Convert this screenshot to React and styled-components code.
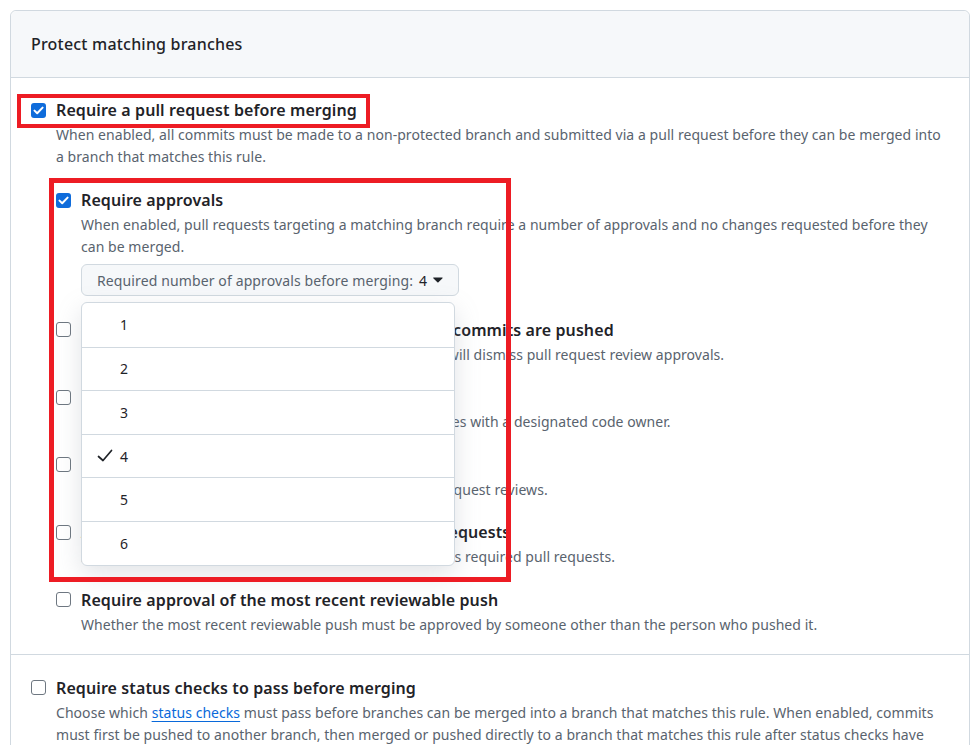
import styled, { createGlobalStyle } from "styled-components"

const GlobalStyle = createGlobalStyle`
    * { box-sizing: border-box; }
    body {
        margin: 0;
        background: #ffffff;
        font-family: "Noto Sans", "Liberation Sans", sans-serif;
        color: #1f2328;
    }
`

const options = [
    {
        title: "Dismiss stale pull request approvals when new commits are pushed",
        text: "New reviewable commits pushed to a matching branch will dismiss pull request review approvals.",
    },
    {
        title: "Require review from Code Owners",
        text: "Require an approved review in pull requests including files with a designated code owner.",
    },
    {
        title: "Restrict who can dismiss pull request reviews",
        text: "Specify people, teams, or apps allowed to dismiss pull request reviews.",
    },
    {
        title: "Allow specified actors to bypass required pull requests",
        text: "Specify people, teams, or apps who are allowed to bypass required pull requests.",
    },
    {
        title: "Require approval of the most recent reviewable push",
        text: "Whether the most recent reviewable push must be approved by someone other than the person who pushed it.",
    },
]

const approvals = [1, 2, 3, 4, 5, 6]
const selected = 4

function CheckMark() {
    return (
        <svg width="11" height="9" viewBox="0 0 11 9">
            <polyline points="1.5,4.6 4.2,7.2 9.6,1.6" fill="none" stroke="#fff" strokeWidth="2" strokeLinecap="round" strokeLinejoin="round" />
        </svg>
    )
}

function Option({ checked, title, children, highlight }) {
    return (
        <Item>
            <Box checked={checked}>{checked ? <CheckMark /> : null}</Box>
            <ItemBody>
                <ItemTitle>{title}</ItemTitle>
                {children}
            </ItemBody>
            {highlight ? <Highlight {...highlight} /> : null}
        </Item>
    )
}

export default function App() {
    return (
        <Page>
            <GlobalStyle />
            <Panel>
                <Header>
                    <h2>Protect matching branches</h2>
                </Header>

                <Section>
                    <Item>
                        <Box checked><CheckMark /></Box>
                        <ItemBody>
                            <TitleRow>
                                <ItemTitle>Require a pull request before merging</ItemTitle>
                                <Highlight top={-4} left={-39} width={353} height={34} size={4} />
                            </TitleRow>
                            <Note>
                                When enabled, all commits must be made to a non-protected branch and submitted via a pull request before they can be merged into a branch that matches this rule.
                            </Note>

                            <Nested>
                                <Option checked title="Require approvals" highlight={{ top: -10, left: -7, width: 462, height: 404, size: 5 }}>
                                    <Note>
                                        When enabled, pull requests targeting a matching branch require a number of approvals and no changes requested before they can be merged.
                                    </Note>
                                    <MenuWrap>
                                        <SelectButton>
                                            <span>Required number of approvals before merging:</span>
                                            <strong>{selected}</strong>
                                            <svg width="10" height="6" viewBox="0 0 10 6">
                                                <path d="M0.6 0.4h8.8a.4.4 0 0 1 .3.7L5.3 5.5a.4.4 0 0 1-.6 0L.3 1.1a.4.4 0 0 1 .3-.7Z" fill="#1f2328" />
                                            </svg>
                                        </SelectButton>
                                        <Menu>
                                            {approvals.map((n) => (
                                                <MenuItem key={n}>
                                                    <Tick>
                                                        {n === selected ? (
                                                            <svg width="16" height="14" viewBox="0 0 16 14">
                                                                <polyline points="1.5,7.5 6,11.5 14.5,1.5" fill="none" stroke="#1f2328" strokeWidth="1.7" strokeLinecap="round" strokeLinejoin="round" />
                                                            </svg>
                                                        ) : null}
                                                    </Tick>
                                                    {n}
                                                </MenuItem>
                                            ))}
                                        </Menu>
                                    </MenuWrap>
                                </Option>

                                {options.map((o) => (
                                    <Option key={o.title} title={o.title}>
                                        <Note>{o.text}</Note>
                                    </Option>
                                ))}
                            </Nested>
                        </ItemBody>
                    </Item>
                </Section>

                <Section last>
                    <Option title="Require status checks to pass before merging">
                        <Note>
                            Choose which <a href="#status">status checks</a> must pass before branches can be merged into a branch that matches this rule. When enabled, commits must first be pushed to another branch, then merged or pushed directly to a branch that matches this rule after status checks have passed.
                        </Note>
                    </Option>
                </Section>
            </Panel>
        </Page>
    )
}

const Page = styled.div`
    padding: 10px 6px 0 10px;
    height: 745px;
    overflow: hidden;
`
const Panel = styled.div`
    border: 1px solid #d1d9e0;
    border-radius: 6px 6px 0 0;
`
const Header = styled.div`
    display: flex;
    align-items: center;
    height: 67px;
    padding: 0 20px;
    background-color: #f6f8fa;
    border-bottom: 1px solid #d1d9e0;
    border-radius: 6px 6px 0 0;
    h2 {
        margin: 0;
        font-size: 16px;
        font-weight: 500;
        letter-spacing: 0.2px;
        color: #1f2328;
    }
`
const Section = styled.div`
    padding: ${(p) => (p.last ? "21px 20px 40px" : "20px 20px 18px")};
    border-bottom: ${(p) => (p.last ? "none" : "1px solid #d1d9e0")};
`
const Item = styled.div`
    position: relative;
    display: grid;
    grid-template-columns: 25px 1fr;
`
const Box = styled.span`
    width: 15px;
    height: 15px;
    margin-top: 4.5px;
    border-radius: 3px;
    display: flex;
    align-items: center;
    justify-content: center;
    border: ${(p) => (p.checked ? "none" : "1px solid #6e7781")};
    background-color: ${(p) => (p.checked ? "#0f6cdb" : "#ffffff")};
`
const ItemBody = styled.div`
    min-width: 0;
`
const TitleRow = styled.div`
    position: relative;
    display: inline-block;
    vertical-align: top;
`
const ItemTitle = styled.div`
    font-size: 16px;
    font-weight: 600;
    line-height: 24px;
    letter-spacing: 0.1px;
    color: #1f2328;
`
const Note = styled.p`
    margin: 2px 0 0;
    font-size: 14px;
    line-height: 22px;
    letter-spacing: 0.05px;
    color: #59636e;
    a {
        color: #0969da;
        text-decoration: underline;
        text-underline-offset: 3px;
    }
`
const Nested = styled.div`
    display: flex;
    flex-direction: column;
    gap: 19.6px;
    margin-top: 20px;
`
const Highlight = styled.span`
    position: absolute;
    top: ${(p) => p.top}px;
    left: ${(p) => p.left}px;
    width: ${(p) => p.width}px;
    height: ${(p) => p.height}px;
    border: ${(p) => p.size}px solid #ed1c24;
    pointer-events: none;
    z-index: 5;
`
const MenuWrap = styled.div`
    position: relative;
    margin-top: 6px;
    margin-bottom: 2px;
    width: 378px;
`
const SelectButton = styled.button`
    display: flex;
    align-items: center;
    gap: 6px;
    width: 378px;
    height: 32px;
    padding: 0 15px;
    border: 1px solid #d1d9e0;
    border-radius: 6px;
    background-color: #f6f8fa;
    font-family: inherit;
    font-size: 14px;
    letter-spacing: 0.12px;
    color: #59636e;
    span { white-space: nowrap; }
    strong {
        font-weight: 400;
        color: #1f2328;
    }
`
const Menu = styled.div`
    position: absolute;
    top: 38px;
    left: 0;
    z-index: 3;
    width: 374px;
    background-color: #ffffff;
    border: 1px solid #d1d9e0;
    border-radius: 6px;
    box-shadow: 0 8px 24px rgba(140, 149, 159, 0.25);
    overflow: hidden;
`
const MenuItem = styled.div`
    display: flex;
    align-items: center;
    height: 43.6px;
    padding-left: 15px;
    font-size: 14px;
    color: #1f2328;
    & + & { border-top: 1px solid #d1d9e0; }
`
const Tick = styled.span`
    display: flex;
    width: 23px;
`
